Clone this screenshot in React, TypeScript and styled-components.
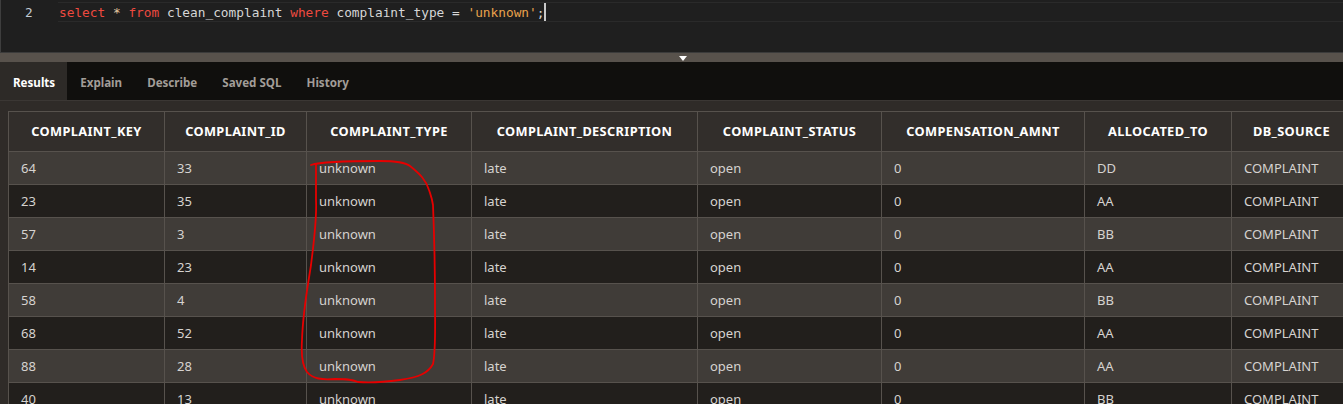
import React from "react";
import styled, { createGlobalStyle } from "styled-components";

const Global = createGlobalStyle`
  html, body { margin: 0; padding: 0; background: #2f2b28; }
  body { width: 1343px; height: 404px; overflow: hidden; font-family: "Noto Sans", sans-serif; }
`;

const Page = styled.div`
  width: 1343px;
  height: 404px;
  display: flex;
  flex-direction: column;
  overflow: hidden;
  position: relative;
`;

const Editor = styled.div`
  background: #1f1f1f;
  border-left: 1px solid #3e3e3e;
  border-bottom: 1px solid #3b3b3b;
  display: flex;
  align-items: flex-start;
  padding-top: 3px;
  box-sizing: border-box;
  height: 53px;
`;

const Gutter = styled.div`
  width: 57px;
  box-sizing: border-box;
  padding-left: 24px;
  font-family: "DejaVu Sans Mono", monospace;
  font-size: 12.8px;
  line-height: 19px;
  color: #c3cbd4;
`;

const CodeLine = styled.div`
  flex: 1;
  height: 18px;
  border-top: 1px solid #2a2a2a;
  border-bottom: 1px solid #2a2a2a;
  margin-top: -1px;
  box-sizing: content-box;
  font-family: "DejaVu Sans Mono", monospace;
  font-size: 12.8px;
  line-height: 19px;
  color: #d6d6d6;
  white-space: pre;
  padding-left: 1px;
`;

const Tok = styled.span<{ $k: "kw" | "str" | "op" | "txt" }>`
  color: ${(p) =>
    p.$k === "kw" ? "#ee4a3f" : p.$k === "str" ? "#e9a24c" : p.$k === "op" ? "#e6c9a0" : "#d6d6d6"};
`;

const Cursor = styled.span`
  display: inline-block;
  width: 2px;
  height: 18px;
  background: #c8c8c8;
  vertical-align: top;
`;

const Splitter = styled.div`
  height: 9px;
  background: #58524c;
  display: flex;
  justify-content: center;
  align-items: flex-start;
  padding-top: 3px;
  box-sizing: border-box;
`;

const Grip = styled.svg`
  margin-left: 23px;
`;

const TabBar = styled.div`
  height: 38px;
  background: #100f0d;
  border-bottom: 1px solid #3b3734;
  display: flex;
  align-items: stretch;
`;

const Tab = styled.div<{ $active?: boolean }>`
  display: flex;
  align-items: center;
  padding: 2px 12px 0 13px;
  font-size: 11.6px;
  font-weight: 700;
  color: ${(p) => (p.$active ? "#ffffff" : "#a29d98")};
  background: ${(p) => (p.$active ? "#2d2a27" : "transparent")};
`;

const Body = styled.div`
  flex: 1;
  background: #2f2b28;
  padding: 10px 0 0 8px;
  overflow: hidden;
`;

const Table = styled.table`
  border-collapse: collapse;
  table-layout: fixed;
  width: 1343px;
  font-family: "Noto Sans", sans-serif;
`;

const Col = styled.col<{ $w: number }>`
  width: ${(p) => p.$w}px;
`;

const Th = styled.th`
  height: 37px;
  background: #322e2b;
  border: 1px solid #57524d;
  color: #ffffff;
  font-size: 12.8px;
  letter-spacing: 0.35px;
  font-weight: 700;
  text-align: center;
  padding: 0 0 2px 0;
  white-space: nowrap;
`;

const Tr = styled.tr<{ $odd: boolean }>`
  background: ${(p) => (p.$odd ? "#403c38" : "#221f1c")};
`;

const Td = styled.td`
  height: 32px;
  border: 1px solid #57524d;
  color: #d6d3d0;
  font-size: 13px;
  padding: 0 0 0 12px;
  white-space: nowrap;
`;

const Annotation = styled.svg`
  position: absolute;
  left: 0;
  top: 0;
  pointer-events: none;
`;

const cols = [156, 142, 165, 226, 184, 203, 147, 120];
const headers = [
  "COMPLAINT_KEY",
  "COMPLAINT_ID",
  "COMPLAINT_TYPE",
  "COMPLAINT_DESCRIPTION",
  "COMPLAINT_STATUS",
  "COMPENSATION_AMNT",
  "ALLOCATED_TO",
  "DB_SOURCE",
];
const rows: [string, string, string][] = [
  ["64", "33", "DD"],
  ["23", "35", "AA"],
  ["57", "3", "BB"],
  ["14", "23", "AA"],
  ["58", "4", "BB"],
  ["68", "52", "AA"],
  ["88", "28", "AA"],
  ["40", "13", "BB"],
];

export default function App() {
  return (
    <Page>
      <Global />
      <Editor>
        <Gutter>2</Gutter>
        <CodeLine>
          <Tok $k="kw">select</Tok>
          <Tok $k="txt"> </Tok>
          <Tok $k="op">*</Tok>
          <Tok $k="txt"> </Tok>
          <Tok $k="kw">from</Tok>
          <Tok $k="txt"> clean_complaint </Tok>
          <Tok $k="kw">where</Tok>
          <Tok $k="txt"> complaint_type = </Tok>
          <Tok $k="str">'unknown'</Tok>
          <Tok $k="txt">;</Tok>
          <Cursor />
        </CodeLine>
      </Editor>
      <Splitter>
        <Grip width="8" height="5" viewBox="0 0 8 5">
          <path d="M0 0 H8 L4 5 Z" fill="#ffffff" />
        </Grip>
      </Splitter>
      <TabBar>
        <Tab $active>Results</Tab>
        <Tab>Explain</Tab>
        <Tab>Describe</Tab>
        <Tab>Saved SQL</Tab>
        <Tab>History</Tab>
      </TabBar>
      <Body>
        <Table>
          <colgroup>
            {cols.map((w, i) => (
              <Col key={i} $w={w} />
            ))}
          </colgroup>
          <thead>
            <tr>
              {headers.map((h) => (
                <Th key={h}>{h}</Th>
              ))}
            </tr>
          </thead>
          <tbody>
            {rows.map((r, i) => (
              <Tr key={i} $odd={i % 2 === 0}>
                <Td>{r[0]}</Td>
                <Td>{r[1]}</Td>
                <Td>unknown</Td>
                <Td>late</Td>
                <Td>open</Td>
                <Td>0</Td>
                <Td>{r[2]}</Td>
                <Td>COMPLAINT</Td>
              </Tr>
            ))}
          </tbody>
        </Table>
      </Body>
      <Annotation width="1343" height="404" viewBox="0 0 1343 404">
        <path
          d="M311 165 C320 162 350 161 380 161 C395 161 405 162 410 166 C420 174 426 180 429 190 C431 196 432 198 433 205 C434 230 435 260 435 300 C435 330 436 350 433 364 C428 373 420 377 400 380 C385 382 370 383 358 382 C352 379 345 379 335 379 C322 380 313 379 307 372 C302 365 301 355 302 340 C303 310 308 285 311 265 C314 240 317 220 316 200 C316 185 316 172 316 165"
          fill="none"
          stroke="#e60000"
          strokeWidth="1.8"
          strokeLinecap="round"
          strokeLinejoin="round"
        />
      </Annotation>
    </Page>
  );
}
